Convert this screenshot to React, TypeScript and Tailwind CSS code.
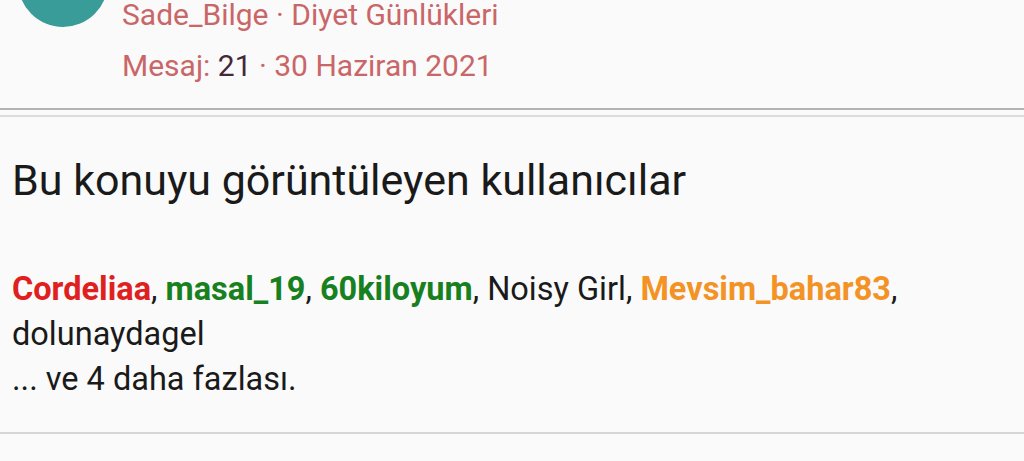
import React from "react";

const viewers = [
  { name: "Cordeliaa", className: "font-bold text-[#e0201f]" },
  { name: "masal_19", className: "font-bold text-[#17801f]" },
  { name: "60kiloyum", className: "font-bold text-[#17801f]" },
  { name: "Noisy Girl", className: "text-[#1a1a1a]" },
  { name: "Mevsim_bahar83", className: "font-bold text-[#f39325]" },
  { name: "dolunaydagel", className: "text-[#1a1a1a]" },
];

export default function App() {
  return (
    <div
      className="w-[1024px] h-[461px] overflow-hidden bg-[#fafafa]"
      style={{ fontFamily: "Roboto, 'Noto Sans', sans-serif" }}
    >
      <div className="flex h-[108px]">
        <div className="ml-[18px] mt-[-63px] w-[90px] h-[90px] rounded-full bg-[#399c98] shrink-0" />
        <div className="ml-[14px] flex flex-col gap-[21px] text-[30px] text-[#c96668] leading-[30px]">
          <div>Sade_Bilge · Diyet Günlükleri</div>
          <div>
            Mesaj: <span className="text-[#45283a]">21</span> · 30 Haziran 2021
          </div>
        </div>
      </div>
      <div className="h-[2px] bg-[#b3b3b3]" />
      <div className="h-[5px]" />
      <div className="h-[2px] bg-[#dcdcdc]" />
      <div className="h-[317px] border-b-2 border-[#d6d6d6] pl-3">
        <h2 className="pt-[38px] text-[43px] leading-[50px] text-[#1a1a1a]">
          Bu konuyu görüntüleyen kullanıcılar
        </h2>
        <div className="mt-[62px] text-[32.5px] leading-[45px] text-[#1a1a1a] pr-[40px]">
          {viewers.map((v, i) => (
            <React.Fragment key={v.name}>
              <span className={v.className}>{v.name}</span>
              {i < viewers.length - 1 ? ", " : ""}
            </React.Fragment>
          ))}
          <div>... ve 4 daha fazlası.</div>
        </div>
      </div>
    </div>
  );
}
